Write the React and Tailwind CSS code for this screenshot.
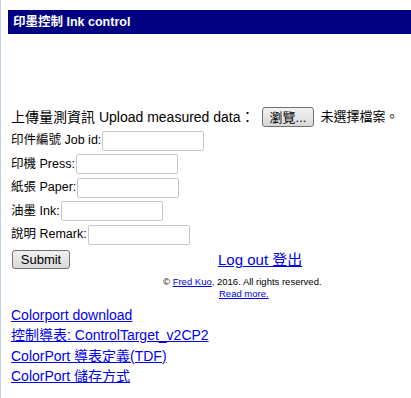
import React from 'react';

const font = { fontFamily: '"Liberation Sans", Arial, "Noto Sans CJK TC", sans-serif' };

function Field({ label }) {
  return (
    <div className="flex items-center h-[23.5px]">
      <span>{label}</span>
      <input
        type="text"
        className="ml-[1px] h-[20px] w-[102px] border border-[#c8c8c8] rounded-[2px] bg-white outline-none"
      />
    </div>
  );
}

export default function App() {
  return (
    <div className="min-h-[398px] bg-white border-l border-[#bcd4ec] text-black" style={font}>
      <div className="pt-[10px] pl-[7px]">
        <div className="h-[24px] bg-[#000080] text-white font-bold text-[12.5px] leading-[24px] pl-[5px]">
          印墨控制 Ink control
        </div>
      </div>

      <div className="pl-[10px] pt-[71px] text-[14px]">
        <div className="flex items-center h-[24px]">
          <span>上傳量測資訊 Upload measured data：</span>
          <button className="ml-[7px] h-[20px] px-[7px] text-[13px] border border-[#707070] rounded-[3px] bg-gradient-to-b from-[#f2f2f2] to-[#d8d8d8]">
            瀏覽...
          </button>
          <span className="ml-[6px] text-[13px]">未選擇檔案。</span>
        </div>
        <div className="text-[12.5px]">
          <Field label="印件編號 Job id:" />
          <Field label="印機 Press:" />
          <Field label="紙張 Paper:" />
          <Field label="油墨 Ink:" />
          <Field label="說明 Remark:" />
        </div>
        <div className="flex items-center mt-[3px]">
          <button className="ml-[1px] w-[58px] h-[19px] text-[13px] border border-[#707070] rounded-[3px] bg-gradient-to-b from-[#f2f2f2] to-[#d8d8d8] leading-none">
            Submit
          </button>
          <a href="#" className="ml-[148px] text-[15px] text-[#0000ee] underline leading-none">
            Log out 登出
          </a>
        </div>
        <div className="text-[9.5px] mt-[7px] pl-[152px] leading-[12px]">
          <div>
            © <a href="#" className="text-[#0000ee] underline">Fred Kuo</a>, 2016. All rights reserved.
          </div>
          <div className="pl-[56px]">
            <a href="#" className="text-[#0000ee] underline">Read more.</a>
          </div>
        </div>
        <div className="mt-[5px] flex flex-col text-[14px] leading-[20.5px]">
          <a href="#" className="text-[#0000ee] underline self-start">Colorport download</a>
          <a href="#" className="text-[#0000ee] underline self-start">控制導表: ControlTarget_v2CP2</a>
          <a href="#" className="text-[#0000ee] underline self-start">ColorPort 導表定義(TDF)</a>
          <a href="#" className="text-[#0000ee] underline self-start">ColorPort 儲存方式</a>
        </div>
      </div>
    </div>
  );
}
